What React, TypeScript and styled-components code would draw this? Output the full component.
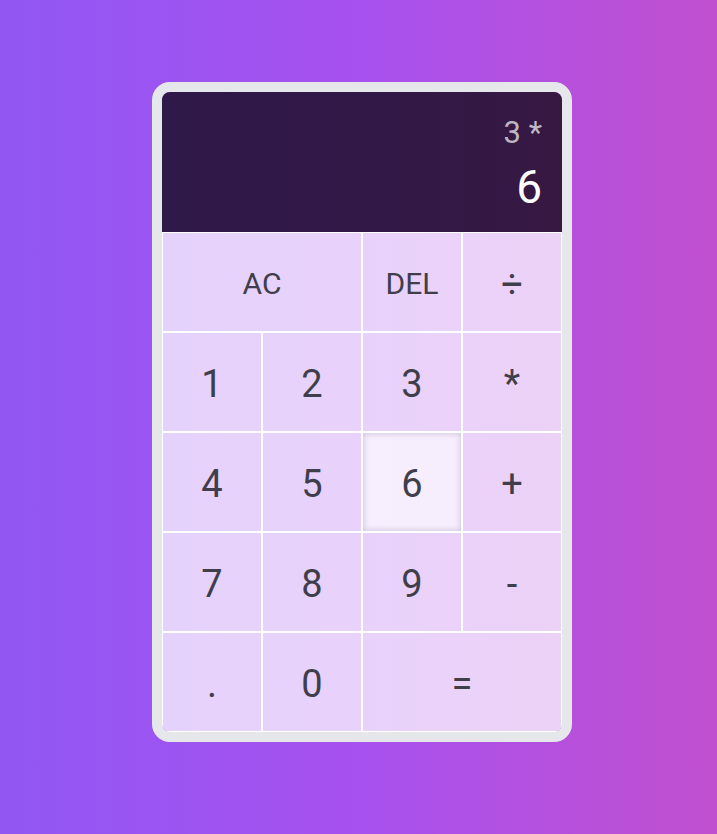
import React from "react";
import styled, { createGlobalStyle, css } from "styled-components";

const Global = createGlobalStyle`
  html, body { margin: 0; padding: 0; }
  body {
    font-family: Roboto, "Noto Sans", "Liberation Sans", sans-serif;
    background: linear-gradient(to right, #9157f3 0%, #a751ef 50%, #c150cf 100%);
    min-height: 100vh;
  }
`;

const Page = styled.div`
  min-height: 100vh;
  box-sizing: border-box;
  display: flex;
  justify-content: center;
  align-items: flex-start;
  padding: 82px 0 0 7px;
`;

const Card = styled.div`
  width: 420px;
  box-sizing: border-box;
  border: 10px solid #e5e7eb;
  border-radius: 18px;
  overflow: hidden;
  display: grid;
  grid-template-columns: repeat(4, 100px);
  grid-template-rows: 140px repeat(5, 100px);
`;

const Display = styled.div`
  grid-column: 1 / -1;
  background: rgba(0, 0, 0, 0.7);
  box-sizing: border-box;
  padding: 25px 20px 22px;
  display: flex;
  flex-direction: column;
  align-items: flex-end;
  justify-content: space-between;
`;

const Previous = styled.div`
  font-size: 31px;
  line-height: 1;
  color: rgba(255, 255, 255, 0.7);
`;

const Current = styled.div`
  font-size: 46px;
  line-height: 1;
  color: #ffffff;
`;

const Key = styled.button<{ $span?: number; $small?: boolean; $active?: boolean }>`
  grid-column: span ${(p) => p.$span ?? 1};
  margin: 0;
  padding: 3px 0 0;
  border: 1px solid #ffffff;
  outline: none;
  background: rgba(255, 255, 255, 0.74);
  color: #403e4b;
  font-family: Roboto, "Noto Sans", "Liberation Sans", sans-serif;
  font-size: ${(p) => (p.$small ? "30px" : "38px")};
  cursor: pointer;
  ${(p) =>
    p.$active &&
    css`
      background: rgba(255, 255, 255, 0.9);
      box-shadow: inset 0 0 6px rgba(60, 40, 90, 0.25);
    `}
`;

const keys: { label: string; span?: number; small?: boolean; active?: boolean }[] = [
  { label: "AC", span: 2, small: true },
  { label: "DEL", small: true },
  { label: "÷" },
  { label: "1" },
  { label: "2" },
  { label: "3" },
  { label: "*" },
  { label: "4" },
  { label: "5" },
  { label: "6", active: true },
  { label: "+" },
  { label: "7" },
  { label: "8" },
  { label: "9" },
  { label: "-" },
  { label: "." },
  { label: "0" },
  { label: "=", span: 2 },
];

export default function App() {
  return (
    <>
      <Global />
      <Page>
        <Card>
          <Display>
            <Previous>3 *</Previous>
            <Current>6</Current>
          </Display>
          {keys.map((k, i) => (
            <Key key={i} $span={k.span} $small={k.small} $active={k.active}>
              {k.label}
            </Key>
          ))}
        </Card>
      </Page>
    </>
  );
}
